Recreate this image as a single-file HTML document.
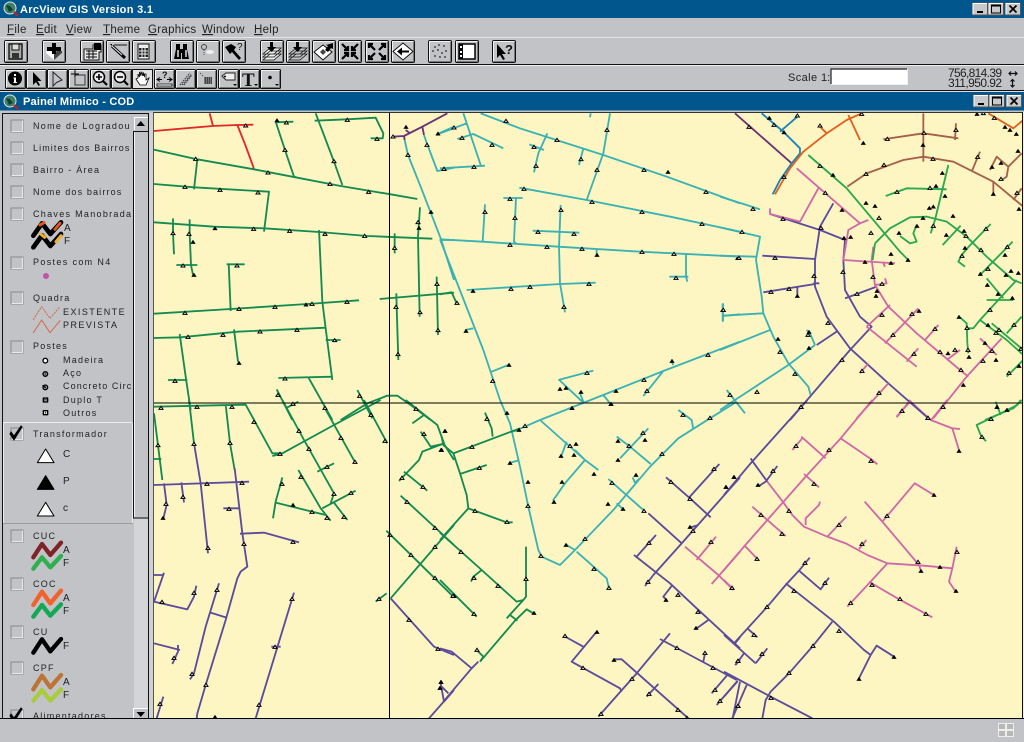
<!DOCTYPE html>
<html><head><meta charset="utf-8"><title>ArcView GIS Version 3.1</title>
<style>html,body{margin:0;padding:0;background:#c2c3c6;overflow:hidden}svg{display:block}
text{font-family:"Liberation Sans",sans-serif;fill:#111}
.l{font-size:9px;letter-spacing:1.25px;fill:#222}
.e{font-size:9px;letter-spacing:1.45px;fill:#222}
.f{font-size:10px;fill:#222}
.m{font-size:11.5px;letter-spacing:.3px;fill:#222}
.t{font-size:11px;font-weight:bold;fill:#fff;letter-spacing:.3px}
.n{fill:none;stroke-linejoin:round;stroke-linecap:butt}
</style></head><body>
<svg xmlns="http://www.w3.org/2000/svg" width="1024" height="742" viewBox="0 0 1024 742">
<defs>
<clipPath id="mc"><rect x="154" y="113" width="868" height="605"/></clipPath>
<clipPath id="pc"><rect x="3" y="114" width="145" height="604"/></clipPath>
<marker id="w" markerUnits="userSpaceOnUse" markerWidth="20" markerHeight="20" refX="10" refY="10" overflow="visible"><path d="M4 14L10 5 16 14Z" fill="#fff" stroke="#000" stroke-width="3"/></marker>
<marker id="k" markerUnits="userSpaceOnUse" markerWidth="20" markerHeight="20" refX="10" refY="10" overflow="visible"><path d="M3 15L10 4 17 15Z" fill="#000" stroke="#000" stroke-width="1"/></marker>
<g id="b"><rect x=".5" y=".5" width="23" height="22" rx="1.5" fill="#c2c3c6" stroke="#111"/><path d="M1.5 21V1.5H22.5" fill="none" stroke="#f2f2f2"/><path d="M2 21.5H22.5V2" fill="none" stroke="#777"/></g>
<g id="c"><rect x=".5" y=".5" width="20" height="19" rx="1" fill="#c2c3c6" stroke="#111"/><path d="M1.5 18V1.5H19.5" fill="none" stroke="#f2f2f2"/><path d="M2 18.5H19.5V2" fill="none" stroke="#777"/></g>
<g id="cb"><rect x="0" y="0" width="12" height="12" fill="#c2c3c6" stroke="#8a8a8a"/><path d="M.5 11.5H11.5V.5" stroke="#e8e8e8" fill="none"/></g>
<g id="x"><rect x=".5" y=".5" width="15" height="12" fill="#c8c9cb" stroke="#555"/><path d="M1 12V1H15" fill="none" stroke="#fff"/></g>
</defs>

<!-- chrome -->
<rect width="1024" height="742" fill="#c2c3c6"/>
<rect width="1024" height="18" fill="#00568d"/>
<rect y="92" width="1024" height="18.500" fill="#00568d"/>
<path d="M0 37.500H1024" stroke="#e4e4e4"/>
<path d="M0 64.500H1024" stroke="#111"/><path d="M0 65.500H1024" stroke="#eee"/>
<path d="M0 90.500H1024" stroke="#111"/><path d="M0 91.500H1024" stroke="#ddd"/>

<!-- title icons -->
<g><circle cx="10" cy="8" r="6" fill="#3f7f6a" stroke="#dfe6e0"/><path d="M6 5l4 1 3 4-4 2z" fill="#12402f"/><path d="M14 12l4 4" stroke="#c02020" stroke-width="2"/></g>
<g transform="translate(0,93)"><circle cx="10" cy="8" r="6" fill="#3f7f6a" stroke="#dfe6e0"/><path d="M6 5l4 1 3 4-4 2z" fill="#12402f"/><path d="M14 12l4 4" stroke="#c02020" stroke-width="2"/></g>
<text class="t" x="20" y="13">ArcView GIS Version 3.1</text>
<text class="t" x="23" y="105" style="letter-spacing:.2px">Painel Mimico - COD</text>

<g transform="translate(972,2.500)"><use href="#x"/><path d="M5 9.500H11" stroke="#000" stroke-width="2"/></g>
<g transform="translate(988,2.500)"><use href="#x"/><rect x="3.500" y="2.500" width="9" height="8" fill="none" stroke="#000"/><path d="M3 3.500H13" stroke="#000"/></g>
<g transform="translate(1005,2.500)"><use href="#x"/><path d="M4.500 3L11.500 10M11.500 3L4.500 10" stroke="#000" stroke-width="1.700"/></g>
<g transform="translate(973,94.500)"><use href="#x"/><path d="M5 9.500H11" stroke="#000" stroke-width="2"/></g>
<g transform="translate(989,94.500)"><use href="#x"/><rect x="3.500" y="2.500" width="9" height="8" fill="none" stroke="#000"/><path d="M3 3.500H13" stroke="#000"/></g>
<g transform="translate(1006,94.500)"><use href="#x"/><path d="M4.500 3L11.500 10M11.500 3L4.500 10" stroke="#000" stroke-width="1.700"/></g>

<!-- menu -->
<text class="m" y="33" x="7"><tspan text-decoration="underline">F</tspan>ile</text>
<text class="m" y="33" x="36"><tspan text-decoration="underline">E</tspan>dit</text>
<text class="m" y="33" x="66"><tspan text-decoration="underline">V</tspan>iew</text>
<text class="m" y="33" x="103"><tspan text-decoration="underline">T</tspan>heme</text>
<text class="m" y="33" x="148"><tspan text-decoration="underline">G</tspan>raphics</text>
<text class="m" y="33" x="202"><tspan text-decoration="underline">W</tspan>indow</text>
<text class="m" y="33" x="254"><tspan text-decoration="underline">H</tspan>elp</text>

<!-- toolbar 1 -->
<g transform="translate(4,40)"><use href="#b"/><path d="M5 4H18V19H5Z" fill="#aaa" stroke="#111" stroke-width="1.400"/><rect x="8" y="4" width="7" height="6" fill="#ddd" stroke="#111"/><rect x="8" y="13" width="7" height="5" fill="#333"/></g>
<g transform="translate(42,40)"><use href="#b"/><path d="M4 11h5l3 3 3-3h5v2l-8 7-8-7z" fill="#fff"/><path d="M12 14l3-3h5v2l-8 7z" fill="#444"/><path d="M10 3h4v4h5v4h-5v3h-4v-3H5V7h5Z" fill="#000"/></g>
<g transform="translate(80,40)"><use href="#b"/><path d="M4 9H13V5H21V12H19V20H4Z" fill="#e8e8e8" stroke="#111"/><path d="M14 3h7v7h-7z" fill="#000"/><path d="M6 11h11M6 14h11M6 17h11M9 10v9M13 10v9" stroke="#111"/></g>
<g transform="translate(106,40)"><use href="#b"/><path d="M8 5H21" stroke="#111"/><path d="M4 4l2 0 0 2z" fill="#000"/><path d="M6 6L19 18" stroke="#000" stroke-width="3"/><path d="M6 6L16 15" stroke="#eee" stroke-width="1"/></g>
<g transform="translate(132,40)"><use href="#b"/><path d="M6 4H17V19H6Z" fill="#eee" stroke="#111"/><path d="M7 8h9v9H7z" fill="#222"/><path d="M10 8v9M13 8v9M7 11h9M7 14h9" stroke="#eee"/></g>
<g transform="translate(170,40)"><use href="#b"/><path d="M6 4h4v5h3V4h4v5l2 10h-7v-6h-1v6H4l2-10z" fill="#000"/><path d="M7 10h2v7H7zM15 10h2v7h-2z" fill="#aaa"/></g>
<g transform="translate(196,40)"><use href="#b"/><circle cx="8" cy="7" r="2.500" fill="none" stroke="#444"/><path d="M8 10v6" stroke="#555" stroke-dasharray="1 1"/><ellipse cx="14" cy="12" rx="4" ry="2" fill="#eee"/></g>
<g transform="translate(222,40)"><use href="#b"/><path d="M3 7l6-3 5 3-2 3 7 8-2 2-7-8-2 2z" fill="#000"/><text x="15" y="10" style="font-size:10px">?</text></g>
<g transform="translate(260,40)"><use href="#b"/><path d="M3 14L10 8H21L14 14ZM3 17L10 11H21L14 17ZM3 20L10 14H21L14 20Z" fill="#eee" stroke="#111" stroke-width=".8"/><path d="M10 2h3v5h3l-4.500 5L7 7h3z" fill="#000"/></g>
<g transform="translate(286,40)"><use href="#b"/><path d="M3 14L10 8H21L14 14ZM3 17L10 11H21L14 17ZM3 20L10 14H21L14 20Z" fill="#c2c3c6" stroke="#111" stroke-width=".8"/><path d="M10 2h3v5h3l-4.500 5L7 7h3z" fill="#000"/></g>
<g transform="translate(312,40)"><use href="#b"/><path d="M2 12L11 5 20 12 11 20Z" fill="#fff" stroke="#111"/><path d="M8 12l3-3 3 3-3 3z" fill="#444"/><path d="M21 3l-7 2 2 1-3 4 3 2 3-4 2 1z" fill="#000"/></g>
<g transform="translate(338,40)"><use href="#b"/><path d="M4 4l6 6m0-4v4H6M20 4l-6 6m0-4v4h4M4 19l6-6m0 4v-4H6M20 19l-6-6m0 4v-4h4" fill="none" stroke="#000" stroke-width="2.200"/></g>
<g transform="translate(365,40)"><use href="#b"/><path d="M10 10L4 4m0 4V4h4M14 10l6-6m0 4V4h-4M10 13l-6 6m0-4v4h4M14 13l6 6m0-4v4h-4" fill="none" stroke="#000" stroke-width="2.200"/></g>
<g transform="translate(391,40)"><use href="#b"/><path d="M12 3L22 11.500 12 20 2 11.500Z" fill="#fff" stroke="#111"/><path d="M6 11.500l5-4v3h7v2h-7v3z" fill="#000"/></g>
<g transform="translate(428,40)"><use href="#b"/><path d="M6 6h2v2H6zM10 4h2v2h-2zM15 5h2v2h-2zM4 10h2v2H4zM9 9h2v2H9zM17 10h2v2h-2zM13 12h2v2h-2zM6 15h2v2H6zM11 16h2v2h-2zM16 16h2v2h-2z" fill="#666"/></g>
<g transform="translate(455,40)"><use href="#b"/><rect x="4" y="4" width="16" height="15" fill="#fff" stroke="#000" stroke-width="1.500"/><rect x="4" y="4" width="4" height="15" fill="#000"/><path d="M5 6h2v2H5zM5 11h2v2H5zM5 15h2v2H5z" fill="#fff"/></g>
<g transform="translate(492,40)"><use href="#b"/><path d="M5 4v14l3-3 3 5 2-1-3-5h4z" fill="#000"/><text x="13" y="14" style="font-size:13px;font-weight:bold">?</text></g>

<!-- toolbar 2 -->
<g transform="translate(5,69)"><use href="#c"/><circle cx="10" cy="9.500" r="7" fill="#000"/><path d="M9 5h2v2H9zM8.500 8.500H11V13h1v1H8.500v-1H9V9.500h-.500z" fill="#fff"/></g>
<g transform="translate(26,69)"><use href="#c"/><path d="M7 3v13l3-3 2.500 4 1.500-1-2.500-4h4z" fill="#000"/></g>
<g transform="translate(47,69)"><use href="#c"/><path d="M6 3v14l3.500-3.500L15 11Z" fill="none" stroke="#222"/></g>
<g transform="translate(68,69)"><use href="#c"/><path d="M7 6H17V16H7V6" fill="none" stroke="#333"/><path d="M7 1v7M3 5h8" stroke="#000"/></g>
<g transform="translate(90,69)"><use href="#c"/><circle cx="9" cy="8" r="5.500" fill="#eee" stroke="#000" stroke-width="1.500"/><path d="M6 8h6M9 5v6" stroke="#000" stroke-width="1.600"/><path d="M13 12l4 4" stroke="#000" stroke-width="2.200"/></g>
<g transform="translate(111,69)"><use href="#c"/><circle cx="9" cy="8" r="5.500" fill="#eee" stroke="#000" stroke-width="1.500"/><path d="M6 8h6" stroke="#000" stroke-width="1.600"/><path d="M13 12l4 4" stroke="#000" stroke-width="2.200"/></g>
<g transform="translate(132,69)"><rect x=".5" y=".5" width="20" height="19" fill="#e2e2e2" stroke="#111"/><path d="M6 9V5l1.500 3V3L9 7V2.500L11 7V3l1.500 5V5l1.500 0v6l3-2-3 7H8L4 10z" fill="#fff" stroke="#000" stroke-width=".8"/></g>
<g transform="translate(154,69)"><use href="#c"/><path d="M3 15h15v2H3z" fill="#fff" stroke="#000" stroke-width=".8"/><path d="M3 10.500h5m-2-2-3 2 3 2M18 10.500h-5m2-2 3 2-3 2" fill="none" stroke="#000"/><text x="8" y="9" style="font-size:9px;font-weight:bold">?</text></g>
<g transform="translate(175,69)"><use href="#c"/><path d="M5 16L15 4M7 16L17 5M9 16l7-9" stroke="#444" stroke-dasharray="1.500 1" stroke-width="1.300"/></g>
<g transform="translate(196,69)"><use href="#c"/><path d="M8 8h8v7H8z" fill="#444"/><path d="M8 8h8M8 10h8M8 12h8M8 14h8" stroke="#aaa" stroke-dasharray="1 1"/><path d="M4 4l1 1M6 6l1 1" stroke="#555"/></g>
<g transform="translate(218,69)"><use href="#c"/><path d="M4 7L8 4H17V11H8Z" fill="#eee" stroke="#222"/><circle cx="7" cy="7.500" r="1" fill="#000"/><path d="M15 15h4l-2 2z" fill="#000"/></g>
<g transform="translate(239,69)"><use href="#c"/><text x="3" y="17" style="font-family:'Liberation Serif',serif;font-size:19px;font-weight:bold">T</text><path d="M15 15h4l-2 2z" fill="#000"/></g>
<g transform="translate(260,69)"><use href="#c"/><circle cx="10" cy="8.500" r="1.800" fill="#000"/><path d="M15 15h4l-2 2z" fill="#000"/></g>

<!-- scale + coordinates -->
<text x="788" y="81" style="font-size:11px;letter-spacing:.4px;fill:#222">Scale</text>
<text x="821" y="81" style="font-size:11px;fill:#222">1:</text>
<rect x="831" y="69" width="76" height="15" fill="#fff"/><path d="M831 84V69H907" fill="none" stroke="#222" stroke-width="1.200"/><path d="M831 84.500H907.500V69" fill="none" stroke="#f0f0f0"/>
<text x="1002" y="77" text-anchor="end" style="font-size:12px;fill:#222" textLength="54">756,814.39</text>
<text x="1002" y="87" text-anchor="end" style="font-size:12px;fill:#222" textLength="54">311,950.92</text>
<path d="M1009 73.500H1017M1011 71.500l-2 2 2 2M1015 71.500l2 2-2 2M1012.500 79.500V87M1010.500 81.500l2-2 2 2M1010.500 85l2 2 2-2" fill="none" stroke="#111" stroke-width="1.200"/>

<!-- map -->
<rect x="154" y="112" width="868" height="606" fill="#fdf6c2"/>
<g clip-path="url(#mc)">
<!-- region 5 -->
<g class="n" transform="translate(154,110) scale(.33333)" stroke-width="5.500">
<path stroke="#e2262a" d="M0 63L175 48 250 45 298 44M167 10L177 48M250 45L272 100 296 165 300 178"/>
<path stroke="#128a50" d="M0 119L130 148 300 178 430 203 560 228 710 253 790 267M130 148L120 238M0 222L120 232 345 245 330 365M0 337L180 350 330 355 495 366 640 378 835 386M57 325L57 370 60 433M107 328L107 372 111 465 117 495M67 465H130M218 463H272M224 460L230 603M0 611L230 597 460 582 615 571M495 360L505 575 515 655 535 810M0 684L80 682 250 665 515 653M77 672L95 800 110 900M42 810H100M240 658L252 755M515 690H560M373 804L535 800M365 35L393 120 420 200 430 203M365 37L418 35M485 10L540 155 565 225M482 32L580 28 665 23 688 70 686 85 650 85M798 292L792 380 797 620M677 567L900 548M727 550L728 590 733 750M848 500L852 675M722 370L722 430M463 802L535 930M368 838L415 930M610 840L655 925M560 930L640 880 700 857 730 857 770 885 830 930"/>
<path stroke="#6a3272" d="M880 10L805 50 750 78 715 80M750 78L752 90M755 60L768 70M805 50L810 75"/>
<path stroke="#3ab2b4" d="M752 90L762 135 800 230 860 385 900 510M810 75L815 90 850 183 900 173M855 70L900 50M860 390H900"/>
<path stroke="none" marker-start="url(#w)" marker-mid="url(#w)" marker-end="url(#w)" d="M275 47 397 38 580 30 669 87 717 80 819 105 762 135 125 147 393 120 540 154 870 177 342 188 528 222 644 246 93 231 198 240 312 248 792 337 299 357 407 363 513 372 632 378 57 370 105 372 722 414 87 467 249 467 849 522 579 576 474 582 363 591 255 597 93 609 726 591 798 607 852 661 102 681 207 675 318 665 429 660 542 691 63 813 393 806 732 733 372 855 617 858"/>
<path stroke="none" marker-start="url(#k)" marker-mid="url(#k)" marker-end="url(#k)" d="M369 31 756 51 852 71 831 306 795 354 117 396 120 495 183 355 456 584 255 759"/>
</g>
<!-- region 8 -->
<g class="n" transform="translate(440,110) scale(.33333)" stroke-width="5.500">
<path stroke="#3ab2b4" d="M122 10L240 55 490 135 680 200 900 280M70 10L122 165M0 70L80 40M52 87L100 72 190 115M0 175L135 167M268 103L312 120M322 70L295 130 282 187M430 115L417 165M510 10L490 130 440 270M452 10L450 22M238 233L440 270 700 322 900 365M0 388L128 395 355 410 600 425 900 440M135 283L128 395M190 264H248M228 264L222 395 230 402M362 285L357 410 360 520 375 607M278 362L418 368M80 540L360 522 467 518M738 432L738 500 742 515M688 500H745M849 580L849 635M849 618L900 613M0 388L130 720 180 870M75 660L100 655M150 787L205 765M470 420L470 432M355 810L460 782M358 810L432 880M420 850L432 880M300 930L432 878 670 783 900 695M490 855L510 880M670 783L610 858M700 765L695 755"/>
<path stroke="#128a50" d="M0 553L35 547 50 580"/>
<path stroke="none" marker-start="url(#w)" marker-mid="url(#w)" marker-end="url(#w)" d="M198 33 501 60 42 53 66 84 156 105 351 90 282 111 423 148 612 180 102 171 12 177 288 168 471 180 798 246 252 237 456 276 606 306 786 342 210 267 135 306 225 324 363 300 294 366 402 372 210 405 321 411 426 417 606 426 702 432 894 444 708 504 213 537 270 531 447 522 372 591 849 600 51 579 804 735 441 789 612 810 621 843 158 813"/>
<path stroke="none" marker-start="url(#k)" marker-mid="url(#k)" marker-end="url(#k)" d="M684 186 471 435 99 543 78 663 207 765 696 753 360 837 378 834 423 846 528 843 396 894 513 882"/>
</g>
<!-- region 9 -->
<g class="n" transform="translate(440,400) scale(.33333)" stroke-width="5.500">
<path stroke="#3ab2b4" d="M180 0L210 70 240 200 265 320 295 450 305 470 360 495 405 450 520 330 630 200 715 115 810 55 890 5M300 60L435 180 475 210M380 125L365 165M405 150L435 180 375 250 340 300 342 305M233 182L212 188M530 110L570 140 632 192M625 85L540 175M505 237L610 330M578 232L585 248 600 235M530 310L550 328M405 450L380 435M410 455L500 535 507 565M715 30L755 60 760 88M300 60L220 95"/>
<path stroke="#128a50" d="M5 110L10 135 40 160 240 85M135 38L155 85 158 110M40 160L60 220 80 285 85 325 40 375 0 420M60 222L140 195M85 325L200 367 218 367M0 398L125 510 230 605 250 600 258 590 258 440M93 545L100 530 125 510M0 540L110 650M250 600L200 655M210 645L232 662M280 640L260 628 225 662 120 785M110 750L130 770 120 785"/>
<path stroke="#5c4a9c" d="M0 745L35 755 95 805 10 905M115 785L95 805M5 860L25 880M625 340L725 430M725 430L640 525 615 558M725 430L900 232M678 232L750 295 812 352M838 192L745 295M648 405L590 470M582 465L690 550 770 625 900 745M695 558L670 590 680 600M805 660L770 685M750 383L775 375M372 708L430 740M470 695L395 785 540 865 545 875M690 700L590 820 475 950M660 717L890 840M522 778L545 778 745 955M655 852L620 890M795 760L790 785M900 780L885 795M862 825L815 880M893 842L830 915M900 845L878 955M900 712L885 730"/>
<path stroke="#d068a8" d="M735 440L835 525 880 570M828 410L770 480M900 455L815 552"/>
<path stroke="none" marker-start="url(#w)" marker-mid="url(#w)" marker-end="url(#w)" d="M141 57 255 78 96 141 118 204 105 333 201 366 264 318 303 468 63 456 102 534 174 558 258 537 42 588 102 642 111 750 375 708 429 804 435 417 462 507 507 564 390 138 567 138 609 99 666 162 516 249 612 333 729 45 810 54 822 207 693 246 750 297 759 393 627 429 813 426 624 546 714 585 774 636 876 564 711 744 795 759 819 804 894 783 576 837 627 882 714 930 825 870 840 903 894 918 483 942 741 954"/>
<path stroke="none" marker-start="url(#k)" marker-mid="url(#k)" marker-end="url(#k)" d="M15 93 5 150 201 39 237 90 396 24 513 12 210 189 264 246 363 168 402 165 408 132 462 222 366 246 342 306 534 123 534 180 615 120 588 225 504 312 549 327 378 435 282 639 471 696 522 780 678 600 768 684 750 381 882 231 858 261 3 846 0 864"/>
</g>
<!-- region 10 -->
<g class="n" transform="translate(724,400) scale(.33333)" stroke-width="5.500">
<path stroke="#5c4a9c" d="M250 0L80 190 0 285M80 175L90 190 130 245M160 198L125 245 105 258M257 473L225 512 185 555 130 620 30 730M0 705L95 790M130 745L95 790M70 685L100 712M60 760L35 795M225 512L290 568 315 533M185 550L330 665 420 750 440 765 458 737 510 770M440 765L405 835M325 665L265 740 195 820 140 875 125 900 115 955M0 815L140 890 265 955M40 845L0 890M68 855L25 955"/>
<path stroke="#d068a8" d="M445 0L350 115 245 230 130 360 60 440 0 510M350 115L445 180 460 193M232 110L305 175M235 115L205 150M240 222L285 262M130 245L180 310 205 345 240 380 310 410 365 430 430 465 490 490 600 497 685 505 698 440M685 505L675 545 695 575M490 490L435 550 370 620M435 545L520 595 625 652M245 375L245 355 285 315 288 305M85 320L130 360 185 408M310 410L367 350M405 447L427 420M60 435L105 482M0 540L30 570M422 305L475 365 530 430 585 495 590 510M475 365L572 250 630 285M555 0L620 60 685 85 708 87M685 85L705 150M555 5L518 52M670 0L620 62"/>
<path stroke="#2aa84e" d="M890 0L880 15 830 40 758 75 770 105 786 124M815 5L830 45"/>
<path stroke="none" marker-start="url(#w)" marker-mid="url(#w)" marker-end="url(#w)" d="M231 21 534 33 612 54 657 21 801 57 774 111 216 138 315 150 441 183 147 213 270 252 195 333 111 345 345 375 489 348 174 402 414 432 99 477 582 486 699 456 243 489 303 549 444 555 24 564 210 573 528 597 380 609 606 642 129 621 345 693 90 705 267 738 114 762 42 783 195 819 141 894 42 918"/>
<path stroke="none" marker-start="url(#k)" marker-mid="url(#k)" marker-end="url(#k)" d="M819 21 849 30 705 153 30 231 6 261 102 255 630 285 591 513 648 501 696 573 510 771 405 837"/>
</g>
<!-- region 6 -->
<g class="n" transform="translate(720,110) scale(.33333)" stroke-width="5.500">
<path stroke="#6a3272" d="M45 10L215 160"/>
<path stroke="#5c4a9c" d="M150 312L300 360 375 390M127 437L285 447M130 547L285 522M232 530L232 555M340 280L300 350 285 450 285 530 320 620 390 715 505 820 625 925M375 390L370 450 375 540 420 620 455 650 390 720 210 930M375 565L470 530M350 665L290 705M285 445V460M280 520H298"/>
<path stroke="#1b84b8" d="M125 10L190 65 240 115 240 130 215 160 180 210 158 253M180 65L232 20"/>
<path stroke="#e2601f" d="M425 10L380 30 320 70 250 125 210 175 165 253M385 15L420 90M300 50L320 70M805 10L880 55 910 30"/>
<path stroke="#a5604a" d="M610 10V155M490 88L610 70 715 85M708 40L705 90M382 230L440 190 550 150 610 140 700 155 820 215 910 290M780 125L755 185M820 215L820 250M880 270L905 235M810 180L830 140 865 170 860 200 845 210M865 170L905 130"/>
<path stroke="#d068a8" d="M230 175L420 340 445 330M150 295L150 312 240 335 295 235M420 340L385 360 370 450 525 460M490 460L495 470M460 410L455 450 465 525 505 590 590 670 720 780 745 800M465 525L500 520 495 505M510 585L440 650M595 595L495 700M440 650L590 770M655 645L615 690M595 715L560 755M445 760L420 790M505 820L410 925M570 875L530 920M720 720L680 750M845 685L740 800 640 925M780 685L830 735"/>
<path stroke="#2aa84e" d="M265 135L380 235 540 425 565 450M685 165L645 330 632 370M497 258L560 235 680 238M465 400L510 355 570 322 620 320 680 335 740 380 800 440 880 510 905 520M590 345L580 370 590 395 570 400 540 378M722 347L668 405M812 342L748 408 725 435 715 455 735 470M878 395L780 495M800 505L850 565M800 570H880M890 510L780 630 860 690 910 735M720 622L740 640 742 700M742 655L760 655 780 630M742 700L745 730M815 640L910 720M905 620L860 670M860 800L910 750M795 930L880 895 905 870M465 400L458 450"/>
<path stroke="#3ab2b4" d="M0 260L80 285 120 298M0 352L120 380 108 450 125 560 130 610 160 680 205 760 265 830 272 855M0 437L108 440M8 580V635M8 617L130 610M0 720L150 660M260 660L270 670 285 705M285 705L205 765 45 870 0 900M20 840L75 910"/>
<path stroke="none" marker-start="url(#w)" marker-mid="url(#w)" marker-end="url(#w)" d="M232 17 162 45 87 51 300 47 425 12 790 10 823 24 612 69 708 60 502 87 639 147 773 141 492 165 300 168 438 192 843 207 630 234 531 246 316 249 891 249 99 297 192 201 477 324 303 354 189 327 640 348 798 357 453 369 66 366 738 378 783 420 862 411 726 438 165 444 57 444 804 477 459 501 369 486 282 498 486 522 207 537 153 546 411 552 10 600 810 600 576 612 486 615 324 639 741 654 645 657 264 675 837 660 828 669 882 645 519 675 180 726 660 726 705 720 744 720 816 723 582 732 903 717 366 750 789 753 723 780 426 783 225 792 867 789 111 846 477 849 30 855 669 891 243 891 546 903 624 924 813 927"/>
<path stroke="none" marker-start="url(#k)" marker-mid="url(#k)" marker-end="url(#k)" d="M148 24 192 67 771 12 855 51 870 60 889 72 430 99 609 105 894 123 667 189 843 159 816 171 339 195 648 228 675 258 820 252 438 279 465 288 628 294 640 290 366 300 897 297 699 318 609 324 591 348 732 363 537 369 679 375 372 384 392 381 735 414 513 432 855 435 564 450 435 456 513 459 781 492 873 483 858 495 895 489 802 525 834 552 471 543 468 558 232 558 877 564 597 603 717 621 804 645 267 666 174 687 267 714 795 699 684 730 747 741 828 750 897 768 730 825 831 891 861 900"/>
</g>
<!-- region 7 -->
<g class="n" transform="translate(154,400) scale(.33333)" stroke-width="5.500">
<path stroke="#128a50" d="M0 20L275 14 355 160 385 160 540 75 680 0M105 0L120 130M215 14L228 130 242 210M0 40L25 240M0 177H22M355 168L385 160M385 0L450 120 540 280 530 310M395 25L433 5M510 20L605 190M630 0L700 130M433 210L500 325 530 362M490 215L540 190M385 232L365 305 357 355M365 308L515 345M505 325L605 272M540 308L580 360M665 605L698 580M755 0L850 75 870 130 805 155 795 180 735 243M775 70L810 45M800 95L830 140 865 132M750 215L820 272M740 287L900 435M697 392L900 592M900 375L710 595M870 132L900 180"/>
<path stroke="#5c4a9c" d="M0 255L285 245M120 130L140 250 162 460M30 250L38 315 28 355M82 247L90 307M242 205L265 400 280 500 260 515 250 535 215 660 155 855 130 940 128 955M208 325H258M258 401L330 398 435 427M0 525H30M30 518L0 605 100 628 120 590 127 557M195 550L155 680 120 820 108 838M170 638L215 652M0 730L78 750M72 735L72 755 55 792M28 890L8 955M420 578L305 955M352 740H380M710 595L840 740 900 765M900 870L825 955M860 850L870 905M870 905L900 870"/>
<path stroke="none" marker-start="url(#w)" marker-mid="url(#w)" marker-end="url(#w)" d="M300 66 378 162 12 136 120 132 228 129 435 93 465 147 561 114 693 123 603 186 519 201 441 231 384 252 540 282 591 279 474 336 519 354 570 351 159 252 264 249 87 291 36 312 225 327 417 426 270 432 162 444 120 579 189 570 24 606 414 597 60 774 363 741 114 822 156 855 18 912 315 915 675 597 765 660 744 234 807 261 759 306 843 384 843 441 771 465 843 534 897 588 708 405 786 27 810 102 852 747 21 24 129 21 234 21 417 12 513 24 651 45"/>
<path stroke="none" marker-start="url(#k)" marker-mid="url(#k)" marker-end="url(#k)" d="M27 354 417 315 873 93 861 150 183 951 861 846 858 864"/>
</g>
<path d="M389.500 112V718M154 403H1022" stroke="#000" stroke-width="1"/>
</g>
<path d="M153.500 112V718.500" stroke="#555"/>
<path d="M154 112.500H1022" stroke="#333"/>
<path d="M1022.500 112V718" stroke="#111"/>
<path d="M1023.500 112V718" stroke="#eee"/>

<!-- legend panel -->
<rect x="148" y="113" width="5" height="605" fill="#d0d1d3"/>
<path d="M2.500 113V718M148.500 113V718" stroke="#111"/><path d="M2 113.500H149" stroke="#111"/>
<g clip-path="url(#pc)">
<!-- scrollbar -->
<rect x="133" y="131" width="15" height="387" fill="#c2c3c6"/>
<path d="M133.500 131V518H148" fill="none" stroke="#111"/>
<path d="M134.500 131V517" stroke="#f4f4f4"/>
<rect x="134" y="519" width="14" height="190" fill="#d4d5d6"/>
<rect x="133" y="117" width="15" height="14" fill="#c2c3c6"/><path d="M133 131.500H148" stroke="#111"/><path d="M134.500 130V117.500H148" fill="none" stroke="#fff"/><path d="M136.500 126H145L140.800 121Z" fill="#000"/>
<rect x="133" y="708" width="15" height="11" fill="#c2c3c6"/><path d="M133.500 718V708.500H148" fill="none" stroke="#fff"/><path d="M136.500 712H145L140.800 717Z" fill="#000"/>
<!-- Transformador box -->
<rect x="3" y="423" width="130" height="100" fill="#c2c3c6"/>
<path d="M3.500 523V422.500H132" fill="none" stroke="#eee"/><path d="M3 523.500H133" stroke="#9c9c9c"/><path d="M132.500 423V523" stroke="#eee"/>

<use href="#cb" x="11" y="120"/><text class="l" x="33" y="129" style="letter-spacing:1.3px">Nome de Logradou</text>
<use href="#cb" x="11" y="142"/><text class="l" x="33" y="151" style="letter-spacing:1.1px">Limites dos Bairros</text>
<use href="#cb" x="11" y="164"/><text class="l" x="33" y="173">Bairro - Área</text>
<use href="#cb" x="11" y="186"/><text class="l" x="33" y="195" style="letter-spacing:1.15px">Nome dos bairros</text>
<use href="#cb" x="11" y="208"/><text class="l" x="33" y="217" style="letter-spacing:1.3px">Chaves Manobrada</text>
<text class="f" x="64" y="231">A</text><text class="f" x="64" y="244">F</text>
<use href="#cb" x="11" y="257"/><text class="e" x="33" y="265" style="letter-spacing:1.35px">Postes com N4</text>
<circle cx="46" cy="276" r="3" fill="#c452a6"/>
<use href="#cb" x="11" y="292"/><text class="l" x="33" y="301">Quadra</text>
<text class="e" x="63" y="315">EXISTENTE</text><text class="e" x="63" y="328">PREVISTA</text>
<use href="#cb" x="11" y="341"/><text class="l" x="33" y="349">Postes</text>
<text class="l" x="63" y="363">Madeira</text><text class="l" x="63" y="376">Aço</text><text class="l" x="63" y="389" style="letter-spacing:1.1px">Concreto Circ</text><text class="l" x="63" y="403">Duplo T</text><text class="l" x="63" y="416">Outros</text>

<use href="#cb" x="11" y="428"/><path d="M11 432l3 4 7-10 1 1-8 13-4-6z" fill="#000" stroke="#000" stroke-width="1"/>
<text class="l" x="33" y="437">Transformador</text>
<text class="f" x="63" y="457">C</text><text class="f" x="63" y="484">P</text><text class="f" x="63" y="511">c</text>
<use href="#cb" x="11" y="530"/><text class="l" x="33" y="539">CUC</text><text class="f" x="63" y="553">A</text><text class="f" x="63" y="566">F</text>
<use href="#cb" x="11" y="578"/><text class="l" x="33" y="587">COC</text><text class="f" x="63" y="601">A</text><text class="f" x="63" y="614">F</text>
<use href="#cb" x="11" y="626"/><text class="l" x="33" y="635">CU</text><text class="f" x="63" y="649">F</text>
<use href="#cb" x="11" y="662"/><text class="l" x="33" y="671">CPF</text><text class="f" x="63" y="685">A</text><text class="f" x="63" y="698">F</text>
<use href="#cb" x="11" y="710"/><path d="M11 714l3 4 7-10 1 1-8 13-4-6z" fill="#000" stroke="#000" stroke-width="1"/>
<text class="l" x="33" y="719">Alimentadores</text>

<!-- legend symbols -->
<g transform="translate(0,110) scale(.33333)" fill="none" stroke-linecap="round" stroke-linejoin="round">
<path d="M100 377L126 340 151 372 183 337" stroke="#000" stroke-width="14"/>
<path d="M100 412L126 376 151 408 183 372" stroke="#000" stroke-width="14"/>
<path d="M120 345L132 338M165 358L180 340" stroke="#e0561f" stroke-width="9"/>
<path d="M122 372L134 382M168 395L183 377" stroke="#f2b020" stroke-width="9"/>
<path d="M100 628L125 590 150 625 180 590" stroke="#d06a4a" stroke-width="3" stroke-dasharray="4 5"/>
<path d="M100 668L125 630 150 668 180 632" stroke="#d06a4a" stroke-width="3"/>
<circle cx="136" cy="752" r="7" fill="#fff" stroke="#000" stroke-width="4"/>
<circle cx="136" cy="792" r="7" fill="#999" stroke="#000" stroke-width="4"/><circle cx="136" cy="792" r="2" fill="#000"/>
<circle cx="136" cy="832" r="7" fill="#999" stroke="#000" stroke-width="4"/><path d="M129 827l7 5" stroke="#000" stroke-width="4"/>
<rect x="130" y="864" width="13" height="12" fill="#ddd" stroke="#000" stroke-width="4"/><path d="M132 866l9 8M141 866l-9 8" stroke="#000" stroke-width="2"/>
<rect x="130" y="902" width="13" height="12" fill="#ddd" stroke="#000" stroke-width="4"/><rect x="135" y="907" width="3" height="3" fill="#000"/>
</g>
<g transform="translate(0,420) scale(.33333)" fill="none" stroke-linecap="round" stroke-linejoin="round">
<path d="M112 128L137 87 162 128Z" fill="#fff" stroke="#000" stroke-width="3"/>
<path d="M112 208L137 167 162 208Z" fill="#000" stroke="#000" stroke-width="3"/>
<path d="M112 288L137 247 162 288Z" fill="#fff" stroke="#000" stroke-width="3"/>
<path d="M100 412L126 372 151 405 183 368" stroke="#7d2428" stroke-width="13"/>
<path d="M100 446L126 412 151 442 183 408" stroke="#2fb050" stroke-width="13"/>
<path d="M100 555L126 515 151 550 183 512" stroke="#f0622c" stroke-width="13"/>
<path d="M100 590L126 555 151 587 183 553" stroke="#12a856" stroke-width="13"/>
<path d="M100 698L126 658 151 694 183 657" stroke="#000" stroke-width="13"/>
<path d="M100 808L126 767 151 802 183 765" stroke="#bc7436" stroke-width="13"/>
<path d="M100 842L126 810 151 842 183 808" stroke="#a8cc3c" stroke-width="13"/>
</g>
</g>

<!-- status bar -->
<rect x="0" y="719" width="1024" height="23" fill="#c2c3c6"/>
<path d="M0 718.500H1024" stroke="#000"/>
<g fill="#b8b8b8" stroke="#eee"><rect x="998.500" y="723.500" width="7" height="6"/><rect x="1006.500" y="723.500" width="7" height="6"/><rect x="998.500" y="730.500" width="7" height="6"/><rect x="1006.500" y="730.500" width="7" height="6"/></g>
</svg>
</body></html>
